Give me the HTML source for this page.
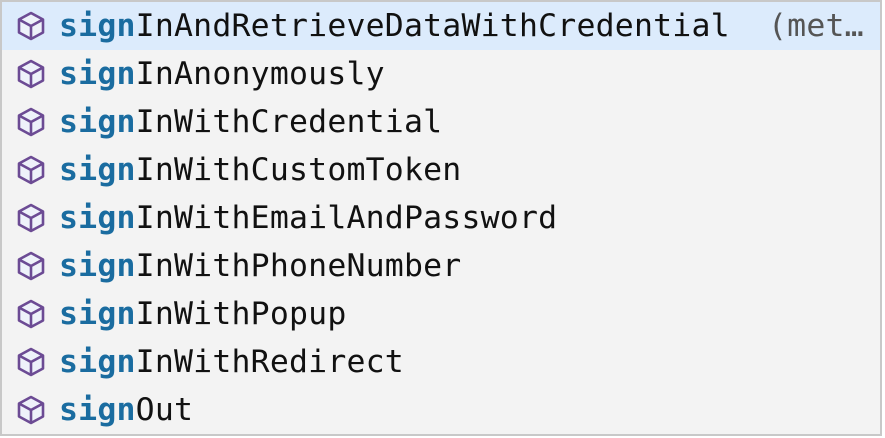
<!DOCTYPE html>
<html><head><style>
body{margin:0;width:885px;height:438px;background:#fff;overflow:hidden}
.box{position:absolute;left:0;top:0;width:878px;height:432px;border:2px solid #c8c8c8;background:#f3f3f3}
.row{position:relative;height:48px;line-height:48px;font-family:"DejaVu Sans Mono","Liberation Mono",monospace;font-size:31.5px;color:#111;white-space:nowrap;letter-spacing:0.2px}
.row.sel{background:#dcebfc}
.row svg{position:absolute;left:14px;top:9px;width:30px;height:30px}
.t{position:absolute;left:57px;top:0}
b{color:#1a6ca0;font-weight:bold}
.d{position:absolute;left:766px;color:#555}
</style></head><body>
<div class="box">
<div class="row sel"><svg viewBox="0 0 30 30"><path d="M15 2L27 8.5V21.5L15 28L3 21.5V8.5Z" fill="#eef2fa" stroke="#6c4b94" stroke-width="2.6" stroke-linejoin="round"/><path d="M3 8.5L15 15L27 8.5M15 15V28" fill="none" stroke="#6c4b94" stroke-width="2.6"/></svg><span class="t"><b>sign</b>InAndRetrieveDataWithCredential</span><span class="d">(met…</span></div>
<div class="row"><svg viewBox="0 0 30 30"><path d="M15 2L27 8.5V21.5L15 28L3 21.5V8.5Z" fill="#eef2fa" stroke="#6c4b94" stroke-width="2.6" stroke-linejoin="round"/><path d="M3 8.5L15 15L27 8.5M15 15V28" fill="none" stroke="#6c4b94" stroke-width="2.6"/></svg><span class="t"><b>sign</b>InAnonymously</span></div>
<div class="row"><svg viewBox="0 0 30 30"><path d="M15 2L27 8.5V21.5L15 28L3 21.5V8.5Z" fill="#eef2fa" stroke="#6c4b94" stroke-width="2.6" stroke-linejoin="round"/><path d="M3 8.5L15 15L27 8.5M15 15V28" fill="none" stroke="#6c4b94" stroke-width="2.6"/></svg><span class="t"><b>sign</b>InWithCredential</span></div>
<div class="row"><svg viewBox="0 0 30 30"><path d="M15 2L27 8.5V21.5L15 28L3 21.5V8.5Z" fill="#eef2fa" stroke="#6c4b94" stroke-width="2.6" stroke-linejoin="round"/><path d="M3 8.5L15 15L27 8.5M15 15V28" fill="none" stroke="#6c4b94" stroke-width="2.6"/></svg><span class="t"><b>sign</b>InWithCustomToken</span></div>
<div class="row"><svg viewBox="0 0 30 30"><path d="M15 2L27 8.5V21.5L15 28L3 21.5V8.5Z" fill="#eef2fa" stroke="#6c4b94" stroke-width="2.6" stroke-linejoin="round"/><path d="M3 8.5L15 15L27 8.5M15 15V28" fill="none" stroke="#6c4b94" stroke-width="2.6"/></svg><span class="t"><b>sign</b>InWithEmailAndPassword</span></div>
<div class="row"><svg viewBox="0 0 30 30"><path d="M15 2L27 8.5V21.5L15 28L3 21.5V8.5Z" fill="#eef2fa" stroke="#6c4b94" stroke-width="2.6" stroke-linejoin="round"/><path d="M3 8.5L15 15L27 8.5M15 15V28" fill="none" stroke="#6c4b94" stroke-width="2.6"/></svg><span class="t"><b>sign</b>InWithPhoneNumber</span></div>
<div class="row"><svg viewBox="0 0 30 30"><path d="M15 2L27 8.5V21.5L15 28L3 21.5V8.5Z" fill="#eef2fa" stroke="#6c4b94" stroke-width="2.6" stroke-linejoin="round"/><path d="M3 8.5L15 15L27 8.5M15 15V28" fill="none" stroke="#6c4b94" stroke-width="2.6"/></svg><span class="t"><b>sign</b>InWithPopup</span></div>
<div class="row"><svg viewBox="0 0 30 30"><path d="M15 2L27 8.5V21.5L15 28L3 21.5V8.5Z" fill="#eef2fa" stroke="#6c4b94" stroke-width="2.6" stroke-linejoin="round"/><path d="M3 8.5L15 15L27 8.5M15 15V28" fill="none" stroke="#6c4b94" stroke-width="2.6"/></svg><span class="t"><b>sign</b>InWithRedirect</span></div>
<div class="row"><svg viewBox="0 0 30 30"><path d="M15 2L27 8.5V21.5L15 28L3 21.5V8.5Z" fill="#eef2fa" stroke="#6c4b94" stroke-width="2.6" stroke-linejoin="round"/><path d="M3 8.5L15 15L27 8.5M15 15V28" fill="none" stroke="#6c4b94" stroke-width="2.6"/></svg><span class="t"><b>sign</b>Out</span></div>
</div>
</body></html>
